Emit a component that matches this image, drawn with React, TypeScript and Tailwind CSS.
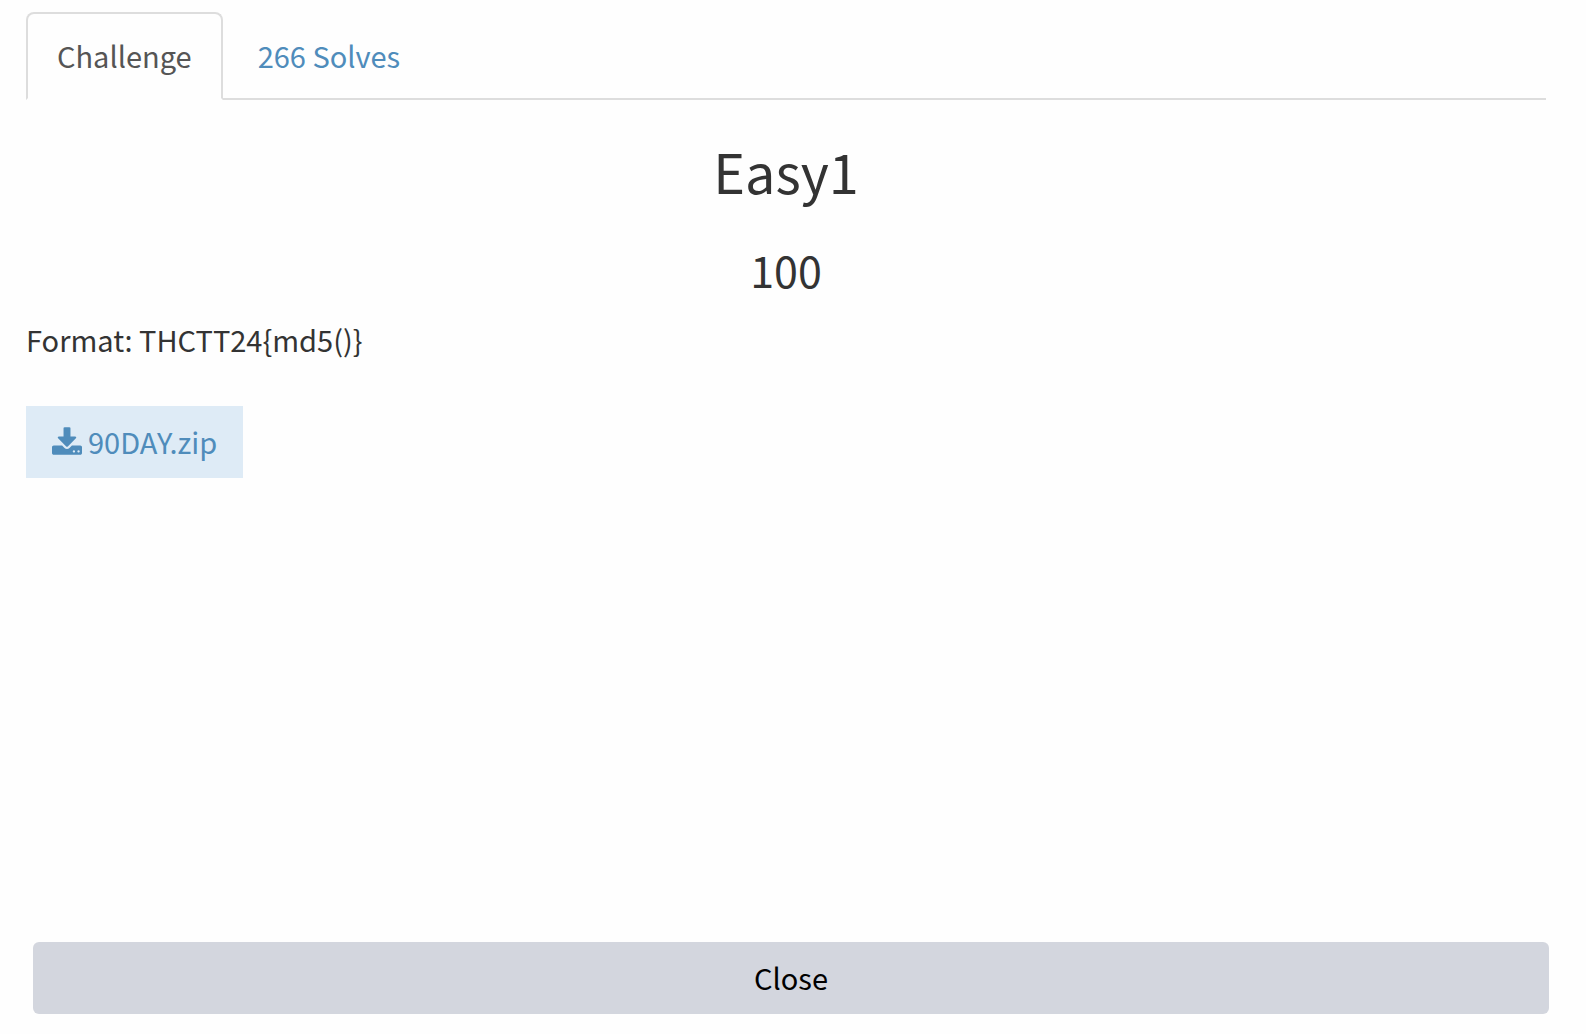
import { useState } from "react";

function DownloadIcon() {
  return (
    <svg viewBox="64 0 1664 1536" className="h-7 w-[30px]" fill="currentColor" aria-hidden="true">
      <path d="M1344 1344q0-26-19-45t-45-19-45 19-19 45 19 45 45 19 45-19 19-45zm256 0q0-26-19-45t-45-19-45 19-19 45 19 45 45 19 45-19 19-45zm128-224v320q0 40-28 68t-68 28h-1472q-40 0-68-28t-28-68v-320q0-40 28-68t68-28h465l135 136q58 56 136 56t136-56l136-136h464q40 0 68 28t28 68zm-325-569q17 41-14 70l-448 448q-18 19-45 19t-45-19l-448-448q-31-29-14-70 17-39 59-39h256v-448q0-26 19-45t45-19h256q26 0 45 19t19 45v448h256q42 0 59 39z" />
    </svg>
  );
}

const tabBase = "h-[88px] rounded-t-lg border-2 px-[29px] pb-0.5";
const tabOn = "border-[#dddddd] border-b-[#fefefe] bg-[#fefefe] text-[#555555]";
const tabOff = "border-transparent text-[#4f8cbb]";

export default function App() {
  const [tab, setTab] = useState("challenge");

  return (
    <div className="flex min-h-screen flex-col bg-[#fefefe] pt-3 pb-5 font-['Noto_Sans_CJK_SC',sans-serif] text-[29px] leading-10 text-[#333333]">
      <main className="mr-10 ml-[26px] flex-1">
        <div role="tablist" className="flex h-[88px] gap-1 border-b-2 border-[#dddddd]">
          <button
            type="button"
            role="tab"
            id="tab-challenge"
            aria-controls="panel"
            aria-selected={tab === "challenge"}
            onClick={() => setTab("challenge")}
            className={`${tabBase} ${tab === "challenge" ? tabOn : tabOff}`}
          >
            Challenge
          </button>
          <button
            type="button"
            role="tab"
            id="tab-solves"
            aria-controls="panel"
            aria-selected={tab === "solves"}
            onClick={() => setTab("solves")}
            className={`${tabBase} ${tab === "solves" ? tabOn : tabOff}`}
          >
            266 Solves
          </button>
        </div>

        <section id="panel" role="tabpanel" aria-labelledby={`tab-${tab}`}>
          {tab === "challenge" && (
            <>
              <h2 className="mt-9 text-center text-[54px] leading-[70px]">Easy1</h2>
              <h3 className="mt-9 text-center text-[43px] leading-[54px]">100</h3>
              <p className="mt-[23px]">Format: THCTT24&#123;md5()&#125;</p>
              <a
                href="#90DAY.zip"
                className="mt-[47px] inline-flex h-[72px] items-center gap-1.5 bg-[#deebf6] px-[26px] pb-0.5 text-[#4f8cbb]"
              >
                <DownloadIcon />
                90DAY.zip
              </a>
            </>
          )}
        </section>
      </main>

      <button type="button" className="mr-[37px] ml-[33px] h-[72px] rounded-md bg-[#d3d6de] pb-0.5 text-black">
        Close
      </button>
    </div>
  );
}
